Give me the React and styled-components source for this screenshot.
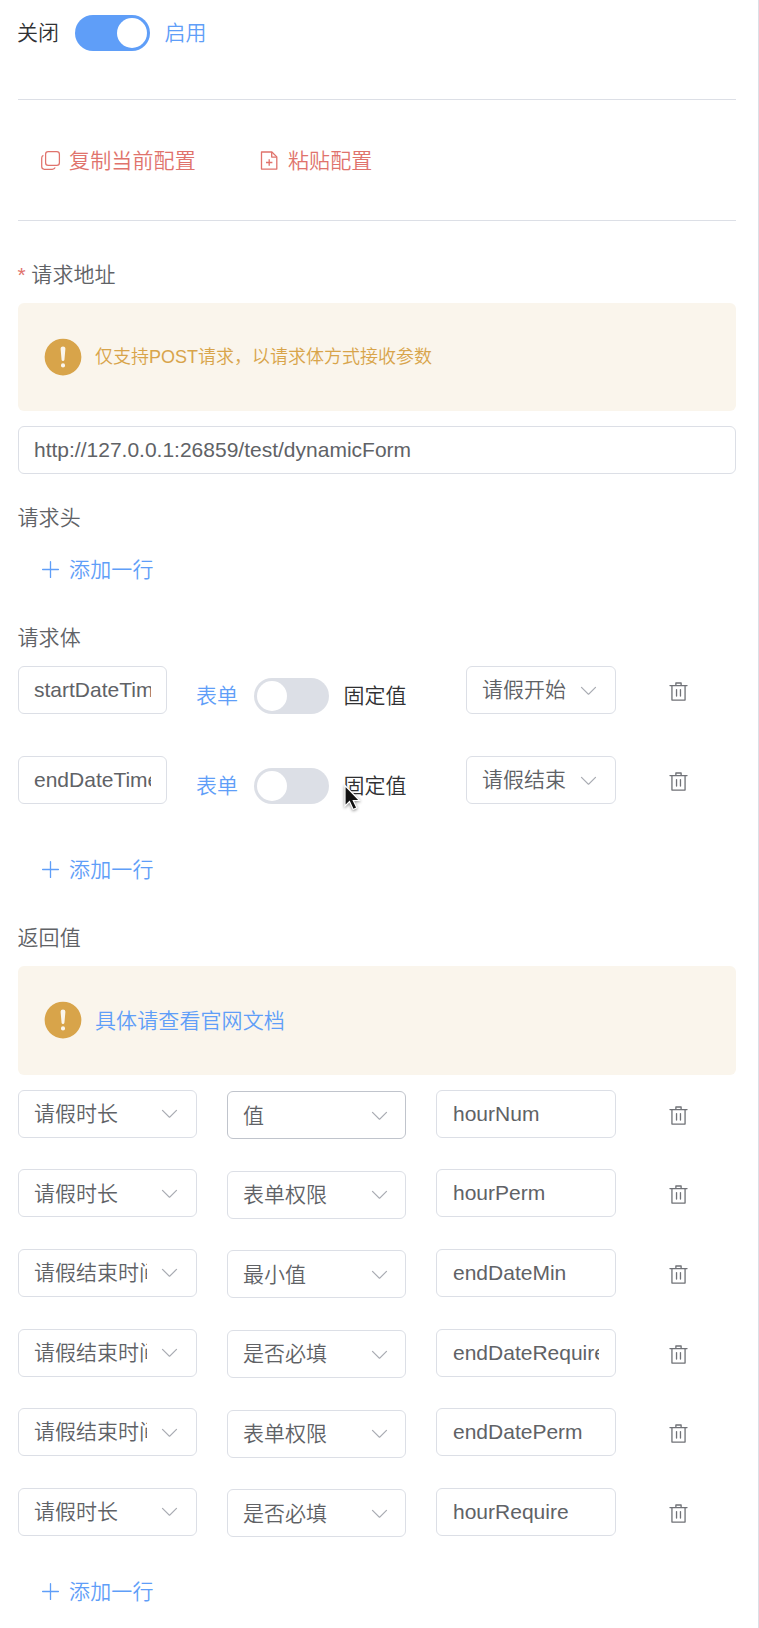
import React, { useState } from "react";
import styled, { createGlobalStyle } from "styled-components";

const GlobalStyle = createGlobalStyle`
  * {
    box-sizing: border-box;
  }
  body {
    margin: 0;
    background: #fff;
    color: #606266;
    font-family: "Liberation Sans", "Noto Sans CJK SC", sans-serif;
    font-size: 21px;
    font-weight: 350;
  }
`;

const Panel = styled.div`
  display: flex;
  flex-direction: column;
  position: relative;
  width: 759px;
  height: 1628px;
  padding: 0 22px 0 18px;
  border-right: 1px solid #dcdfe6;
  overflow: hidden;
`;

const Divider = styled.hr`
  flex: none;
  width: 100%;
  height: 1px;
  margin: 0;
  border: 0;
  background: #dcdfe6;
`;

const Header = styled.div`
  height: 99px;
  padding-top: 15px;
`;

const SwitchRow = styled.div`
  display: flex;
  align-items: center;
  gap: 15px;
  height: 36px;
  line-height: 36px;
`;

const SwitchLabel = styled.span`
  white-space: nowrap;
  color: ${(p) => (p.$active ? "#5f9ef8" : "#303133")};

  &:first-child {
    margin-left: -1px;
    margin-right: 1px;
  }
  &:last-child {
    margin-left: -0.5px;
  }
`;

const Track = styled.button`
  display: flex;
  justify-content: ${(p) => (p.$on ? "flex-end" : "flex-start")};
  align-items: center;
  flex: none;
  width: 75px;
  height: 36px;
  padding: 0 3px;
  border: 0;
  border-radius: 18px;
  background: ${(p) => (p.$on ? "#5f9ef8" : "#dcdfe6")};
`;

const Knob = styled.span`
  width: 30px;
  height: 30px;
  border-radius: 50%;
  background: #fff;
`;

const Toolbar = styled.div`
  display: flex;
  align-items: center;
  gap: 63px;
  height: 120px;
  padding-left: 22px;
`;

const TextButton = styled.button`
  display: flex;
  align-items: center;
  gap: 8px;
  height: 48px;
  padding: 0;
  border: 0;
  background: none;
  font: inherit;
  letter-spacing: 0.15px;
  color: ${(p) => (p.$danger ? "#e0736c" : "#5f9ef8")};
`;

const AddButton = styled(TextButton)`
  flex: none;
  height: 36px;
  margin-left: 22px;
  margin-top: ${(p) => p.$top}px;
`;

const ButtonText = styled.span`
  padding-bottom: 3px;
`;

const Label = styled.div`
  flex: none;
  height: 36px;
  line-height: 36px;
  margin-top: ${(p) => p.$top}px;
  margin-left: -0.5px;
  letter-spacing: 0.1px;
`;

const Required = styled.span`
  margin-right: 5.5px;
  color: #e0736c;
`;

const Alert = styled.div`
  flex: none;
  display: flex;
  align-items: center;
  gap: 11px;
  height: ${(p) => p.$height}px;
  margin-top: 10px;
  padding: 0 24px 1px;
  border-radius: 6px;
  background: #faf5ec;
  color: #d8a44a;
  font-size: 18px;
`;

const AlertText = styled.span`
  padding-bottom: 3px;
`;

const DocLink = styled.a`
  padding-bottom: 3px;
  font-size: 21px;
  letter-spacing: 0.1px;
  color: #5f9ef8;
`;

const Input = styled.input`
  flex: none;
  width: ${(p) => p.$width}px;
  height: 48px;
  padding: 0 15px;
  border: 1.5px solid #dcdfe6;
  border-radius: 6px;
  background: #fff;
  color: #606266;
  font: inherit;
  outline: none;
`;

const AddressInput = styled(Input)`
  width: 100%;
  margin-top: 15px;
`;

const NameInput = styled(Input)`
  padding: 0 16px;
`;

const SelectBox = styled.div`
  display: flex;
  align-items: center;
  flex: none;
  width: ${(p) => p.$width}px;
  height: 48px;
  padding: 0 ${(p) => p.$end}px 0 15px;
  border: 1.5px solid ${(p) => (p.$hover ? "#c0c4cc" : "#dcdfe6")};
  border-radius: 6px;
  background: #fff;
`;

const SelectValue = styled.span`
  flex: 1;
  overflow: hidden;
  white-space: nowrap;
  margin-right: 12px;
  padding-bottom: 3.5px;
`;

const BodyRows = styled.div`
  display: flex;
  flex-direction: column;
  gap: 42px;
  margin-top: 10px;
`;

const BodyRow = styled.div`
  display: grid;
  grid-template-columns: 179px 269px 202px auto;
  height: 48px;
`;

const SwitchCell = styled.div`
  padding-top: 12px;
`;

const ResultRows = styled.div`
  display: flex;
  flex-direction: column;
  gap: 31.6px;
  margin-top: 14.8px;
`;

const ResultRow = styled.div`
  display: grid;
  grid-template-columns: 209px 209px 232px auto;
  height: 48px;
`;

const SecondCell = styled.div`
  padding-top: 1.5px;
`;

const DeleteButton = styled.button`
  display: flex;
  justify-self: start;
  height: 21px;
  margin-top: 15px;
  padding: 0;
  border: 0;
  background: none;
  color: #707277;
`;

const Pointer = styled.svg`
  position: absolute;
  left: 342px;
  top: 783px;
  filter: drop-shadow(0 1px 1.5px rgba(0, 0, 0, 0.45));
`;

const Icon = ({ size = 21, color = "currentColor", d }) => (
  <svg width={size} height={size} viewBox="0 0 1024 1024" fill={color}>
    <path d={d} />
  </svg>
);

const PlusIcon = () => (
  <Icon d="M480 480V128a32 32 0 0 1 64 0v352h352a32 32 0 1 1 0 64H544v352a32 32 0 1 1-64 0V544H128a32 32 0 0 1 0-64z" />
);

const ArrowIcon = () => (
  <Icon
    color="#a8abb2"
    d="M831.872 340.864 512 652.672 192.128 340.864a30.592 30.592 0 0 0-42.752 0 29.12 29.12 0 0 0 0 41.6L489.664 714.24a32 32 0 0 0 44.672 0l340.288-331.712a29.12 29.12 0 0 0 0-41.728 30.592 30.592 0 0 0-42.752 0z"
  />
);

const DeleteIcon = () => (
  <Icon d="M160 256H96a32 32 0 0 1 0-64h256V95.936a32 32 0 0 1 32-32h256a32 32 0 0 1 32 32V192h256a32 32 0 1 1 0 64h-64v672a32 32 0 0 1-32 32H192a32 32 0 0 1-32-32zm448-64v-64H416v64zM224 896h576V256H224zm192-128a32 32 0 0 1-32-32V416a32 32 0 0 1 64 0v320a32 32 0 0 1-32 32m192 0a32 32 0 0 1-32-32V416a32 32 0 0 1 64 0v320a32 32 0 0 1-32 32" />
);

const WarningIcon = () => (
  <Icon
    size={42}
    d="M512 64a448 448 0 1 1 0 896 448 448 0 0 1 0-896m0 192a58.432 58.432 0 0 0-58.24 63.744l23.36 256.384a35.072 35.072 0 0 0 69.76 0l23.296-256.384A58.432 58.432 0 0 0 512 256m0 512a51.2 51.2 0 1 0 0-102.4 51.2 51.2 0 0 0 0 102.4"
  />
);

const CopyIcon = () => (
  <svg width="21" height="21" viewBox="0 0 21 21" fill="none" stroke="currentColor" strokeWidth="1.25">
    <rect x="5.6" y="1.6" width="13.8" height="13.8" rx="2.6" />
    <path d="M3.4 5.4C2.2 5.900 1.700 6.700 1.700 7.900v8.700c0 1.800.9 2.700 2.700 2.700h7.800c1.500 0 2.500-.6 3-1.700" />
  </svg>
);

const PasteIcon = () => (
  <svg width="21" height="21" viewBox="0 0 21 21" fill="none" stroke="currentColor" strokeWidth="1.3" strokeLinejoin="round">
    <path d="M2.500 2h10.400l4.900 4.900v12.200H2.500z" />
    <path d="M12.700 2v5.100h5.100" />
    <path d="M10.200 9.300v6.400M7 12.500h6.400" />
  </svg>
);

const Switch = ({ left, right, defaultOn = false }) => {
  const [on, setOn] = useState(defaultOn);
  return (
    <SwitchRow>
      <SwitchLabel $active={!on}>{left}</SwitchLabel>
      <Track $on={on} onClick={() => setOn(!on)}>
        <Knob />
      </Track>
      <SwitchLabel $active={on}>{right}</SwitchLabel>
    </SwitchRow>
  );
};

const Select = ({ width, value, hover, end = 16 }) => (
  <SelectBox $width={width} $hover={hover} $end={end}>
    <SelectValue>{value}</SelectValue>
    <ArrowIcon />
  </SelectBox>
);

const AddRow = ({ top }) => (
  <AddButton $top={top}>
    <PlusIcon />
    <ButtonText>添加一行</ButtonText>
  </AddButton>
);

const bodyParams = [
  { name: "startDateTime", field: "请假开始" },
  { name: "endDateTime", field: "请假结束" },
];

const results = [
  { field: "请假时长", prop: "值", name: "hourNum", hover: true },
  { field: "请假时长", prop: "表单权限", name: "hourPerm" },
  { field: "请假结束时间", prop: "最小值", name: "endDateMin" },
  { field: "请假结束时间", prop: "是否必填", name: "endDateRequire" },
  { field: "请假结束时间", prop: "表单权限", name: "endDatePerm" },
  { field: "请假时长", prop: "是否必填", name: "hourRequire" },
];

const App = () => {
  return (
    <Panel>
      <GlobalStyle />
      <Header>
        <Switch left="关闭" right="启用" defaultOn />
      </Header>
      <Divider />
      <Toolbar>
        <TextButton $danger>
          <CopyIcon />
          <ButtonText>复制当前配置</ButtonText>
        </TextButton>
        <TextButton $danger>
          <PasteIcon />
          <ButtonText>粘贴配置</ButtonText>
        </TextButton>
      </Toolbar>
      <Divider />

      <Label $top={36}>
        <Required>*</Required>请求地址
      </Label>
      <Alert $height={108}>
        <WarningIcon />
        <AlertText>仅支持POST请求，以请求体方式接收参数</AlertText>
      </Alert>
      <AddressInput defaultValue="http://127.0.0.1:26859/test/dynamicForm" />

      <Label $top={26}>请求头</Label>
      <AddRow top={15} />

      <Label $top={33}>请求体</Label>
      <BodyRows>
        {bodyParams.map((p) => (
          <BodyRow key={p.name}>
            <Input $width={149} defaultValue={p.name} />
            <SwitchCell>
              <Switch left="表单" right="固定值" />
            </SwitchCell>
            <Select width={150} value={p.field} end={16} />
            <DeleteButton>
              <DeleteIcon />
            </DeleteButton>
          </BodyRow>
        ))}
      </BodyRows>
      <AddRow top={47} />

      <Label $top={33}>返回值</Label>
      <Alert $height={109}>
        <WarningIcon />
        <DocLink>具体请查看官网文档</DocLink>
      </Alert>
      <ResultRows>
        {results.map((r, i) => (
          <ResultRow key={i}>
            <Select width={179} value={r.field} />
            <SecondCell>
              <Select width={179} value={r.prop} hover={r.hover} end={15} />
            </SecondCell>
            <NameInput $width={180} defaultValue={r.name} />
            <DeleteButton>
              <DeleteIcon />
            </DeleteButton>
          </ResultRow>
        ))}
      </ResultRows>
      <AddRow top={37.7} />

      <Pointer width="20" height="30" viewBox="0 0 20 30">
        <path
          d="M3 2.500v20.500l4.500-4.500 3.700 8 3.600-1.700-3.500-7.300h6.200z"
          fill="#111"
          stroke="#fff"
          strokeWidth="1.2"
        />
      </Pointer>
    </Panel>
  );
};

export default App;
